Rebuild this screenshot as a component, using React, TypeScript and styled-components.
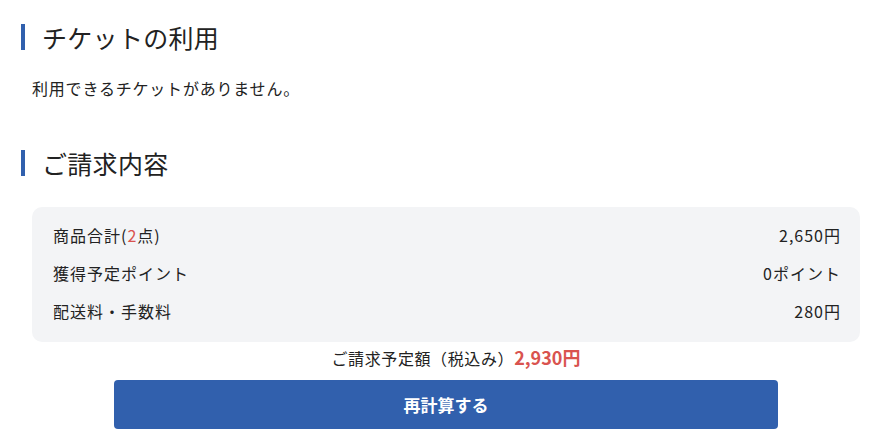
import React from 'react';
import styled, {createGlobalStyle} from 'styled-components';

const GlobalStyle = createGlobalStyle`
  body {
    margin: 0;
    background: #ffffff;
    color: #222222;
    font-family: "Noto Sans CJK JP", "Noto Sans", sans-serif;
  }
`;

const Page = styled.div`
  display: flex;
  flex-direction: column;
  padding: 24px 25px 0 21px;
`;

const Heading = styled.h2`
  margin: 0;
  border-left: 4px solid #3160ad;
  padding-left: 17px;
  height: 26px;
  display: flex;
  align-items: center;
  font-size: 25px;
  font-weight: 400;
  line-height: 26px;
  letter-spacing: 0.3px;
  color: #222222;
`;

const Notice = styled.p`
  margin: 26px 0 50px 11px;
  font-size: 16px;
  line-height: 24px;
  letter-spacing: 0.8px;
`;

const Summary = styled.div`
  margin: 31px 0 0 11px;
  display: flex;
  flex-direction: column;
`;

const Card = styled.div`
  background: #f3f4f6;
  border-radius: 10px;
  padding: 16px 20px 19px 21px;
  display: flex;
  flex-direction: column;
  gap: 14px;
`;

const Row = styled.div`
  display: flex;
  justify-content: space-between;
  font-size: 16px;
  line-height: 24px;
  letter-spacing: 1px;
  > span:last-child {
    margin-right: -1px;
  }
`;

const Red = styled.span<{$bold?: boolean}>`
  color: #d9534f;
  font-weight: ${p => (p.$bold ? 700 : 400)};
  font-size: ${p => (p.$bold ? '18px' : 'inherit')};
  letter-spacing: ${p => (p.$bold ? '0' : 'inherit')};
`;

const Total = styled.div`
  margin-top: 3px;
  text-align: center;
  font-size: 16px;
  line-height: 24px;
  letter-spacing: 0.6px;
  padding-left: 20px;
`;

const Button = styled.button`
  margin: 10px 82px 0;
  height: 49px;
  border: none;
  border-radius: 4px;
  background: #3160ad;
  color: #ffffff;
  font-family: inherit;
  font-size: 17px;
  font-weight: 700;
  cursor: pointer;
`;

const rows = [
  {label: <>商品合計(<Red>2</Red>点)</>, value: '2,650円'},
  {label: '獲得予定ポイント', value: '0ポイント'},
  {label: '配送料・手数料', value: '280円'},
];

export default function App() {
  return (
    <>
      <GlobalStyle />
      <Page>
        <Heading>チケットの利用</Heading>
        <Notice>利用できるチケットがありません。</Notice>
        <Heading>ご請求内容</Heading>
        <Summary>
          <Card>
            {rows.map((r, i) => (
              <Row key={i}>
                <span>{r.label}</span>
                <span>{r.value}</span>
              </Row>
            ))}
          </Card>
          <Total>
            ご請求予定額（税込み）<Red $bold>2,930円</Red>
          </Total>
          <Button>再計算する</Button>
        </Summary>
      </Page>
    </>
  );
}
